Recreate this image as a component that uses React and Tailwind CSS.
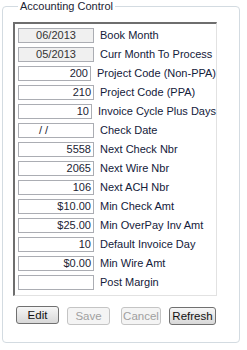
const rows = [
  { value: '06/2013', label: 'Book Month', readOnly: true },
  { value: '05/2013', label: 'Curr Month To Process', readOnly: true },
  { value: '200', label: 'Project Code (Non-PPA)' },
  { value: '210', label: 'Project Code (PPA)' },
  { value: '10', label: 'Invoice Cycle Plus Days' },
  { value: '/ /', label: 'Check Date', date: true },
  { value: '5558', label: 'Next Check Nbr' },
  { value: '2065', label: 'Next Wire Nbr' },
  { value: '106', label: 'Next ACH Nbr' },
  { value: '$10.00', label: 'Min Check Amt' },
  { value: '$25.00', label: 'Min OverPay Inv Amt' },
  { value: '10', label: 'Default Invoice Day' },
  { value: '$0.00', label: 'Min Wire Amt' },
  { value: '', label: 'Post Margin' },
]

const Field = ({ row }) => {
  let cls = 'bg-white text-right pr-[2px] text-[#1b2333]'
  if (row.readOnly) cls = 'bg-[#f0f0f0] text-center text-[#333]'
  if (row.date) cls = 'bg-white text-left pl-[20px] text-[#1b2333]'
  return (
    <div className="flex items-center h-[15px]">
      <div className={`w-[76px] h-[15px] border border-[#abadb3] leading-[13px] text-[11px] ${cls}`}>
        {row.value}
      </div>
      <span className="ml-[6px] text-[11px] leading-[13px] text-[#13203a] whitespace-nowrap">{row.label}</span>
    </div>
  )
}

const Btn = ({ children, disabled, w }) => (
  <button
    className={`h-[18px] ${w} rounded-[3px] border text-[11.5px] leading-[16px] ${
      disabled
        ? 'border-[#c4c4c4] bg-[#f4f4f4] text-[#a0a0a0]'
        : 'border-[#707070] bg-gradient-to-b from-[#f6f6f6] to-[#d8d8d8] text-[#111]'
    }`}
  >
    {children}
  </button>
)

export default function App() {
  return (
    <div className="w-[247px] h-[350px] bg-white" style={{ fontFamily: '"Liberation Sans", Arial, sans-serif' }}>
      <fieldset className="ml-[2px] w-[238px] h-[343px] border border-[#d3dbe1] rounded-[4px] px-[10px] pb-[17px]">
        <legend className="ml-[5px] px-[2px] text-[11px] leading-[13px] text-[#1b2333]">Accounting Control</legend>

        {/* panel */}
        <div className="mt-[9px] w-[204px] border-t-2 border-l-2 border-t-[#6e6e6e] border-l-[#6e6e6e] border-r border-b border-r-[#e2e2e2] border-b-[#e2e2e2] pl-[3px] pt-[4px] pb-[5px] flex flex-col gap-[4px]">
          {rows.map((r) => (
            <Field key={r.label} row={r} />
          ))}
        </div>

        <div className="mt-[7px] flex items-center pl-[3px]">
          <Btn w="w-[43px]">Edit</Btn>
          <div className="ml-[8px]">
            <Btn w="w-[43px]" disabled>Save</Btn>
          </div>
          <div className="ml-[11px]">
            <Btn w="w-[40px]" disabled>Cancel</Btn>
          </div>
          <div className="ml-[8px]">
            <Btn w="w-[47px]">Refresh</Btn>
          </div>
        </div>
      </fieldset>
    </div>
  )
}
